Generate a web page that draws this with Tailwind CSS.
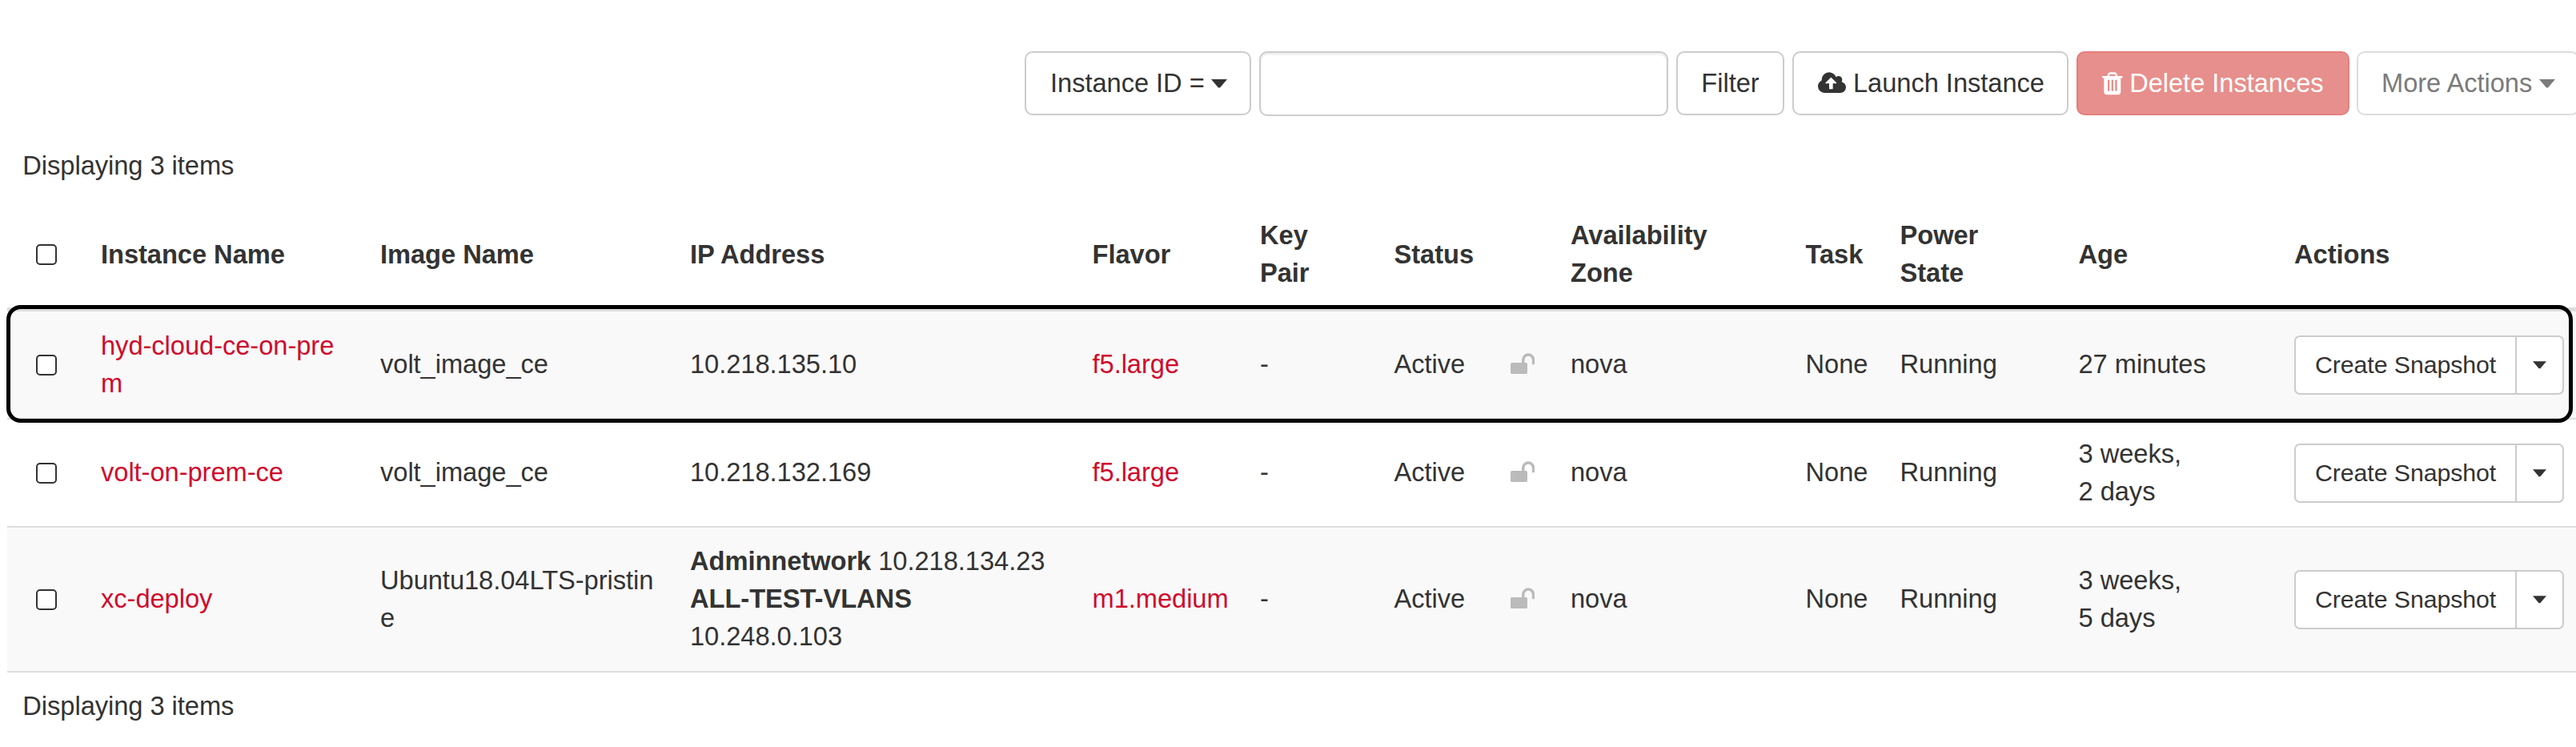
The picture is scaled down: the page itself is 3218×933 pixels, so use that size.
<!DOCTYPE html>
<html lang="en">
<head>
<meta charset="utf-8">
<title>Instances</title>
<script src="https://cdn.jsdelivr.net/npm/@tailwindcss/browser@4"></script>
</head>
<body class="w-[3218px] h-[933px] overflow-hidden bg-white text-[#333] text-[32.67px] leading-[46.67px] tracking-[-0.05px] font-['Liberation_Sans',Arial,sans-serif]">
<svg class="hidden">
  <symbol id="unlock" viewBox="0 0 1664 1792"><path d="M1664 576v256q0 26-19 45t-45 19h-64q-26 0-45-19t-19-45v-256q0-106-75-181t-181-75-181 75-75 181v192h96q40 0 68 28t28 68v576q0 40-28 68t-68 28h-960q-40 0-68-28t-28-68v-576q0-40 28-68t68-28h672v-192q0-185 131.5-316.5t316.5-131.5 316.5 131.5 131.5 316.5z"/></symbol>
  <symbol id="caret" viewBox="0 0 20 11"><path d="M0 0h20l-9 10.5h-2z"/></symbol>
</svg>

<!-- Toolbar -->
<div class="flex items-start pt-16 pl-[1280px] w-[3240px] whitespace-nowrap">
  <button class="flex items-center h-20 w-[283px] pl-[30px] border-2 border-[#ccc] rounded-[10px] shrink-0">
    <span>Instance ID =</span>
    <svg class="w-5 h-[11px] ml-[8.5px]" fill="#333"><use href="#caret"/></svg>
  </button>
  <input type="text" class="h-[81px] w-[511px] ml-[10px] border-2 border-[#ccc] rounded-[10px] shrink-0 shadow-[inset_0_2px_3px_rgba(0,0,0,0.09)]">
  <button class="flex items-center justify-center h-20 w-[135px] ml-[10px] border-2 border-[#ccc] rounded-[10px] shrink-0">Filter</button>
  <button class="flex items-center h-20 w-[345px] ml-[10px] pl-[30px] border-2 border-[#ccc] rounded-[10px] shrink-0">
    <svg class="w-[35px] h-[32.67px]" viewBox="0 0 1920 1792" fill="#333"><path d="M1280 864q0-14-9-23l-352-352q-9-9-23-9t-23 9l-351 351q-10 12-10 24 0 14 9 23t23 9h224v352q0 13 9.5 22.5t22.5 9.5h192q13 0 22.5-9.5t9.5-22.5v-352h224q13 0 22.5-9.5t9.5-22.5zM1920 1152q0 159-112.5 271.5t-271.5 112.5h-1088q-185 0-316.5-131.5t-131.5-316.5q0-130 70-240t188-165q-2-30-2-43 0-212 150-362t362-150q156 0 285.5 87t188.5 231q71-62 166-62 106 0 181 75t75 181q0 76-41 138 130 31 213.5 135.5t83.5 238.5z"/></svg>
    <span class="ml-[9px]">Launch Instance</span>
  </button>
  <button class="flex items-center h-20 w-[341px] ml-[10px] pl-[30px] border-2 border-[#e47f7c] bg-[#e78f8c] text-white rounded-[10px] shrink-0">
    <svg class="w-[25.67px] h-[32.67px]" viewBox="0 0 1408 1792" fill="#fff"><path d="M512 1376v-704q0-14-9-23t-23-9h-64q-14 0-23 9t-9 23v704q0 14 9 23t23 9h64q14 0 23-9t9-23zm256 0v-704q0-14-9-23t-23-9h-64q-14 0-23 9t-9 23v704q0 14 9 23t23 9h64q14 0 23-9t9-23zm256 0v-704q0-14-9-23t-23-9h-64q-14 0-23 9t-9 23v704q0 14 9 23t23 9h64q14 0 23-9t9-23zm-544-992h448l-48-117q-7-9-17-11h-317q-10 2-17 11zm928 32v64q0 14-9 23t-23 9h-96v948q0 83-47 143.5t-113 60.5h-832q-66 0-113-58.5t-47-141.5v-952h-96q-14 0-23-9t-9-23v-64q0-14 9-23t23-9h309l70-167q15-37 54-63t79-26h320q40 0 79 26t54 63l70 167h309q14 0 23 9t9 23z"/></svg>
    <span class="ml-[8.5px]">Delete Instances</span>
  </button>
  <button class="flex items-center h-20 w-[278px] ml-[9px] pl-[29px] border-2 border-[#ddd] text-[#7b7b7b] rounded-[10px] shrink-0">
    <span>More Actions</span>
    <svg class="w-5 h-[11px] ml-[9px]" fill="#7b7b7b"><use href="#caret"/></svg>
  </button>
</div>

<div class="pl-[28.3px] mt-[39px]">Displaying 3 items</div>

<!-- Instances table -->
<div class="relative pl-[9px] mt-[22.33px]">
  <div class="grid grid-cols-[82px_349px_387px_502.5px_209.5px_167.5px_145px_75.5px_293.5px_118px_223px_269.5px_352px] items-center h-[136px] pl-[35px] pb-px border-b-5 border-[#ddd] font-bold">
    <input type="checkbox" class="appearance-none block ml-[0.5px] size-[26px] border-2 border-[#333] rounded-[5px] bg-white">
    <div>Instance Name</div><div>Image Name</div><div>IP Address</div><div>Flavor</div><div>Key<br>Pair</div><div>Status</div><div></div><div>Availability<br>Zone</div><div>Task</div><div>Power<br>State</div><div>Age</div><div>Actions</div>
  </div>

  <div class="grid grid-cols-[82px_349px_387px_502.5px_209.5px_167.5px_145px_75.5px_293.5px_118px_223px_269.5px_352px] items-center h-[135px] pl-[35px] border-b-2 border-[#ddd] bg-[#f9f9f9]">
    <input type="checkbox" class="appearance-none block ml-[0.5px] size-[26px] border-2 border-[#333] rounded-[5px] bg-white">
    <a class="text-[#cf0a2c]">hyd-cloud-ce-on-pre<br>m</a><div>volt_image_ce</div><div>10.218.135.10</div><a class="text-[#cf0a2c]">f5.large</a><div>-</div><div>Active</div>
    <svg class="w-[30.33px] h-[32.67px]" fill="#bbb"><use href="#unlock"/></svg>
    <div>nova</div><div>None</div><div>Running</div><div>27 minutes</div>
    <div class="flex h-[74px] w-[337px] border-2 border-[#ccc] rounded-[7px] bg-white text-[30.33px] tracking-[-0.1px]">
      <button class="w-[276px] pl-[24px] pt-px text-left border-r-2 border-[#ccc]">Create Snapshot</button>
      <button class="flex flex-1 items-center justify-center"><svg class="w-[17px] h-[10px]" fill="#333"><use href="#caret"/></svg></button>
    </div>
  </div>

  <div class="grid grid-cols-[82px_349px_387px_502.5px_209.5px_167.5px_145px_75.5px_293.5px_118px_223px_269.5px_352px] items-center h-[135px] pl-[35px] border-b-2 border-[#ddd]">
    <input type="checkbox" class="appearance-none block ml-[0.5px] size-[26px] border-2 border-[#333] rounded-[5px] bg-white">
    <a class="text-[#cf0a2c]">volt-on-prem-ce</a><div>volt_image_ce</div><div>10.218.132.169</div><a class="text-[#cf0a2c]">f5.large</a><div>-</div><div>Active</div>
    <svg class="w-[30.33px] h-[32.67px]" fill="#bbb"><use href="#unlock"/></svg>
    <div>nova</div><div>None</div><div>Running</div><div>3 weeks,<br>2 days</div>
    <div class="flex h-[74px] w-[337px] border-2 border-[#ccc] rounded-[7px] bg-white text-[30.33px] tracking-[-0.1px]">
      <button class="w-[276px] pl-[24px] pt-px text-left border-r-2 border-[#ccc]">Create Snapshot</button>
      <button class="flex flex-1 items-center justify-center"><svg class="w-[17px] h-[10px]" fill="#333"><use href="#caret"/></svg></button>
    </div>
  </div>

  <div class="grid grid-cols-[82px_349px_387px_502.5px_209.5px_167.5px_145px_75.5px_293.5px_118px_223px_269.5px_352px] items-center h-[181px] pl-[35px] border-b-2 border-[#ddd] bg-[#f9f9f9]">
    <input type="checkbox" class="appearance-none block ml-[0.5px] size-[26px] border-2 border-[#333] rounded-[5px] bg-white">
    <a class="text-[#cf0a2c]">xc-deploy</a><div>Ubuntu18.04LTS-pristin<br>e</div><div><b>Adminnetwork</b> 10.218.134.23<br><b>ALL-TEST-VLANS</b><br>10.248.0.103</div><a class="text-[#cf0a2c]">m1.medium</a><div>-</div><div>Active</div>
    <svg class="w-[30.33px] h-[32.67px]" fill="#bbb"><use href="#unlock"/></svg>
    <div>nova</div><div>None</div><div>Running</div><div>3 weeks,<br>5 days</div>
    <div class="flex h-[74px] w-[337px] border-2 border-[#ccc] rounded-[7px] bg-white text-[30.33px] tracking-[-0.1px]">
      <button class="w-[276px] pl-[24px] pt-px text-left border-r-2 border-[#ccc]">Create Snapshot</button>
      <button class="flex flex-1 items-center justify-center"><svg class="w-[17px] h-[10px]" fill="#333"><use href="#caret"/></svg></button>
    </div>
  </div>

  <!-- Highlight around the first instance -->
  <div class="absolute left-2 top-[128px] w-[3206px] h-[147px] border-5 border-black rounded-[18px] pointer-events-none"></div>
</div>

<div class="pl-[28.3px] mt-[19px]">Displaying 3 items</div>
</body>
</html>
